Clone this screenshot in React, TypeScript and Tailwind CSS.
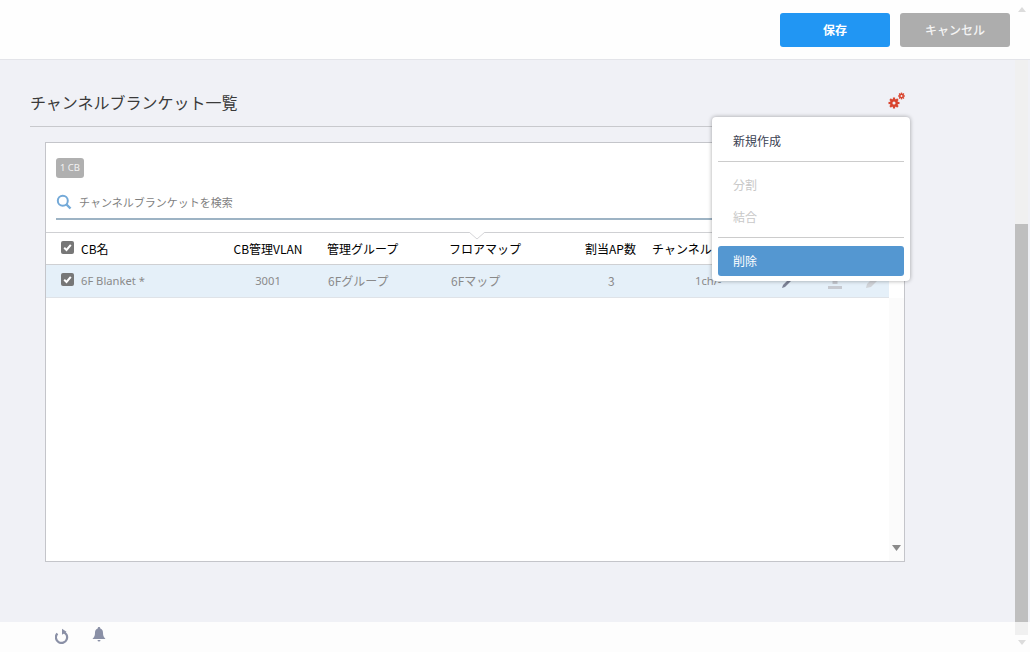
import React from "react";

const Gear = ({ size, cx, cy }: { size: number; cx: number; cy: number }) => {
  const teeth = [0, 45, 90, 135, 180, 225, 270, 315];
  return (
    <g fill="#d9452f">
      <circle cx={cx} cy={cy} r={size * 0.72} />
      {teeth.map((a) => (
        <rect key={a} x={cx - size * 0.2} y={cy - size} width={size * 0.4} height={size * 0.5} transform={`rotate(${a} ${cx} ${cy})`} />
      ))}
      <circle cx={cx} cy={cy} r={size * 0.28} fill="#f0f1f6" />
    </g>
  );
};

const Check = ({ className = "" }: { className?: string }) => (
  <span className={`flex h-[13px] w-[13px] items-center justify-center rounded-[2px] bg-[#777777] ${className}`}>
    <svg width="11" height="11" viewBox="0 0 11 11" fill="none">
      <path d="M2.2 5.8 L4.5 8 L8.8 2.8" stroke="#ffffff" strokeWidth="2" />
    </svg>
  </span>
);

export default function App() {
  return (
    <div className="relative flex h-[652px] w-[1030px] flex-col overflow-hidden bg-[#f0f1f6] font-['Noto_Sans_CJK_JP','Noto_Sans',sans-serif] text-[12px]">
      <header className="flex h-[60px] shrink-0 items-start justify-end gap-[10px] border-b border-[#e3e4e9] bg-[#fefefe] pr-[20px] pt-[13px]">
        <button className="h-[34px] w-[110px] rounded-[3px] bg-[#2196f3] text-[12px] font-bold text-white">保存</button>
        <button className="h-[34px] w-[110px] rounded-[3px] bg-[#adadad] text-[12px] font-medium text-[#f4f4f4]">キャンセル</button>
      </header>

      <main className="min-h-0 flex-1 pl-[30px]">
        <div className="flex h-[67px] w-[875px] items-start justify-between border-b border-[#c8c9cd] pt-[30px]">
          <h1 className="text-[16px] leading-[24px] text-[#3a3a3a]">チャンネルブランケット一覧</h1>
          <svg width="18" height="18" viewBox="0 0 18 18" className="mr-[-1px] mt-[1px]">
            <Gear size={5.5} cx={6} cy={12} />
            <Gear size={3.4} cx={13.5} cy={5} />
          </svg>
        </div>

        <section className="ml-[15px] mt-[15px] flex h-[420px] w-[860px] flex-col border border-[#c4c5ca] bg-white">
          <div className="px-[10px] pt-[15px]">
            <span className="flex h-[20px] w-[28px] items-center justify-center rounded-[3px] bg-[#b0b0b0] font-['Noto_Sans',sans-serif] text-[9.5px] text-[#f2f2f2]">1 CB</span>
          </div>
          <div className="mx-[10px] mt-[12px] flex h-[30px] items-center gap-[7px] border-b-2 border-[#9db3c4] pb-[4px]">
            <svg width="16" height="16" viewBox="0 0 16 16" fill="none" stroke="#73a9d8" strokeWidth="2">
              <circle cx="6.8" cy="6.8" r="5" />
              <path d="M10.5 10.5 L14.5 14.5" strokeWidth="2.4" />
            </svg>
            <span className="text-[11px] text-[#7f7f7f]">チャンネルブランケットを検索</span>
          </div>

          <div className="relative mt-[12px] flex h-[33px] items-center border-y border-[#cfd0d3] text-[12px] text-black">
            <svg width="16" height="8" viewBox="0 0 16 8" className="absolute left-[423px] top-[-1px]">
              <path d="M0 0 L8 7 L16 0" fill="#ffffff" stroke="#d5d5d8" />
            </svg>
            <span className="ml-[15px] flex w-[155px] items-center gap-[7px]"><Check className="-mt-[3px]" />CB名</span>
            <span className="w-[104px] text-center">CB管理VLAN</span>
            <span className="w-[122px] pl-[7px]">管理グループ</span>
            <span className="w-[130px] pl-[7px]">フロアマップ</span>
            <span className="w-[80px] pl-[13px]">割当AP数</span>
            <span>チャンネル</span>
          </div>

          <div className="flex h-[33px] w-[843px] items-center border-b border-[#dfe3e8] bg-[#e5f0f9] text-[12px] text-[#8a8a8a]">
            <span className="ml-[15px] flex w-[155px] items-center gap-[7px] font-['Noto_Sans',sans-serif] text-[11.2px]"><Check className="-mt-[2px]" />6F Blanket *</span>
            <span className="w-[104px] text-center font-['Noto_Sans',sans-serif] text-[11.2px]">3001</span>
            <span className="w-[122px] pl-[8px]">6Fグループ</span>
            <span className="w-[130px] pl-[9px]">6Fマップ</span>
            <span className="w-[80px] pl-[36px]">3</span>
            <span className="pl-[43px] font-['Noto_Sans',sans-serif] text-[11.2px]">1ch/-</span>
            <div className="ml-auto mr-[10px] mt-[1px] flex items-center">
              <svg width="14" height="14" viewBox="0 0 14 14">
                <path d="M1 13 L2 10 L10 2 L12 4 L4 12 Z" fill="#7c8296" />
              </svg>
              <svg width="16" height="14" viewBox="0 0 16 14" className="ml-[32px]">
                <path d="M8 1 L12 5 H10.5 V9 H5.5 V5 H4 Z M1 11 H15 V14 H1 Z" fill="#c6c9d0" />
              </svg>
              <svg width="14" height="14" viewBox="0 0 14 14" className="ml-[22px]">
                <path d="M1 13 L2 9 L9 2 L13 5 L6 12 Z" fill="#d0d3d8" />
              </svg>
            </div>
          </div>
          <div className="relative flex-1">
            <div className="absolute bottom-0 right-0 top-0 w-[15px] bg-[#fbfbfb]" />
            <svg width="9" height="6" viewBox="0 0 9 6" className="absolute bottom-[10px] right-[3px]">
              <path d="M0 0 H9 L4.5 6 Z" fill="#8a8a8a" />
            </svg>
          </div>
        </section>
      </main>

      <footer className="flex h-[30px] shrink-0 items-start gap-[22px] bg-[#fdfdfd] pl-[55px] pt-[5px]">
        <svg width="15" height="16" viewBox="0 0 15 16" fill="none" stroke="#8a90a6" strokeWidth="2.2" className="mt-[1px]">
          <path d="M2.4 5.5 A5.6 5.6 0 1 0 7.5 3.8" />
          <path d="M7 0.8 L11.5 3.8 L7 6.8 Z" fill="#8a90a6" stroke="none" />
        </svg>
        <svg width="14" height="16" viewBox="0 0 14 16" fill="#8a90a6">
          <path d="M7 0 C8 0 8.3 .7 8.3 1.4 C10.5 2 11 4 11 6 C11 9 12 10.5 13.5 12 H.5 C2 10.5 3 9 3 6 C3 4 3.5 2 5.7 1.4 C5.7 .7 6 0 7 0 Z" />
          <path d="M5.5 13 H8.5 A1.5 1.5 0 0 1 5.5 13 Z" />
        </svg>
      </footer>

      {/* scrollbar overlay */}
      <div className="absolute bottom-0 right-[2px] top-0 flex w-[13px] flex-col">
        <div className="flex h-[60px] justify-center pt-[7px]">
          <svg width="8" height="5" viewBox="0 0 8 5"><path d="M0 5 H8 L4 0 Z" fill="#dcdcdc" /></svg>
        </div>
        <div className="h-[164px] bg-[#f0f0f0]" />
        <div className="h-[398px] bg-[#bfbfbf]" />
        <div className="h-[13px] bg-[#f0f0f0]" />
        <div className="flex flex-1 justify-center pt-[5px]">
          <svg width="8" height="5" viewBox="0 0 8 5"><path d="M0 0 H8 L4 5 Z" fill="#dcdcdc" /></svg>
        </div>
      </div>

      {/* menu */}
      <div className="absolute left-[712px] top-[117px] w-[198px] rounded-[4px] bg-white px-[6px] pb-[5px] shadow-[0_0_4px_rgba(0,0,0,0.35)]">
        <div className="flex h-[45px] items-center border-b border-[#cccccc] pl-[15px] pt-[4px] text-[12px] text-[#3b4252]">新規作成</div>
        <div className="mt-[7px] flex h-[32px] items-center pl-[15px] text-[12px] text-[#c8c8c8]">分割</div>
        <div className="flex h-[32px] items-center pl-[15px] text-[12px] text-[#c8c8c8]">結合</div>
        <div className="mt-[4px] h-[9px] border-t border-[#cccccc]" />
        <div className="flex h-[30px] items-center rounded-[3px] bg-[#5497d1] pl-[15px] text-[12px] text-white">削除</div>
      </div>
    </div>
  );
}
